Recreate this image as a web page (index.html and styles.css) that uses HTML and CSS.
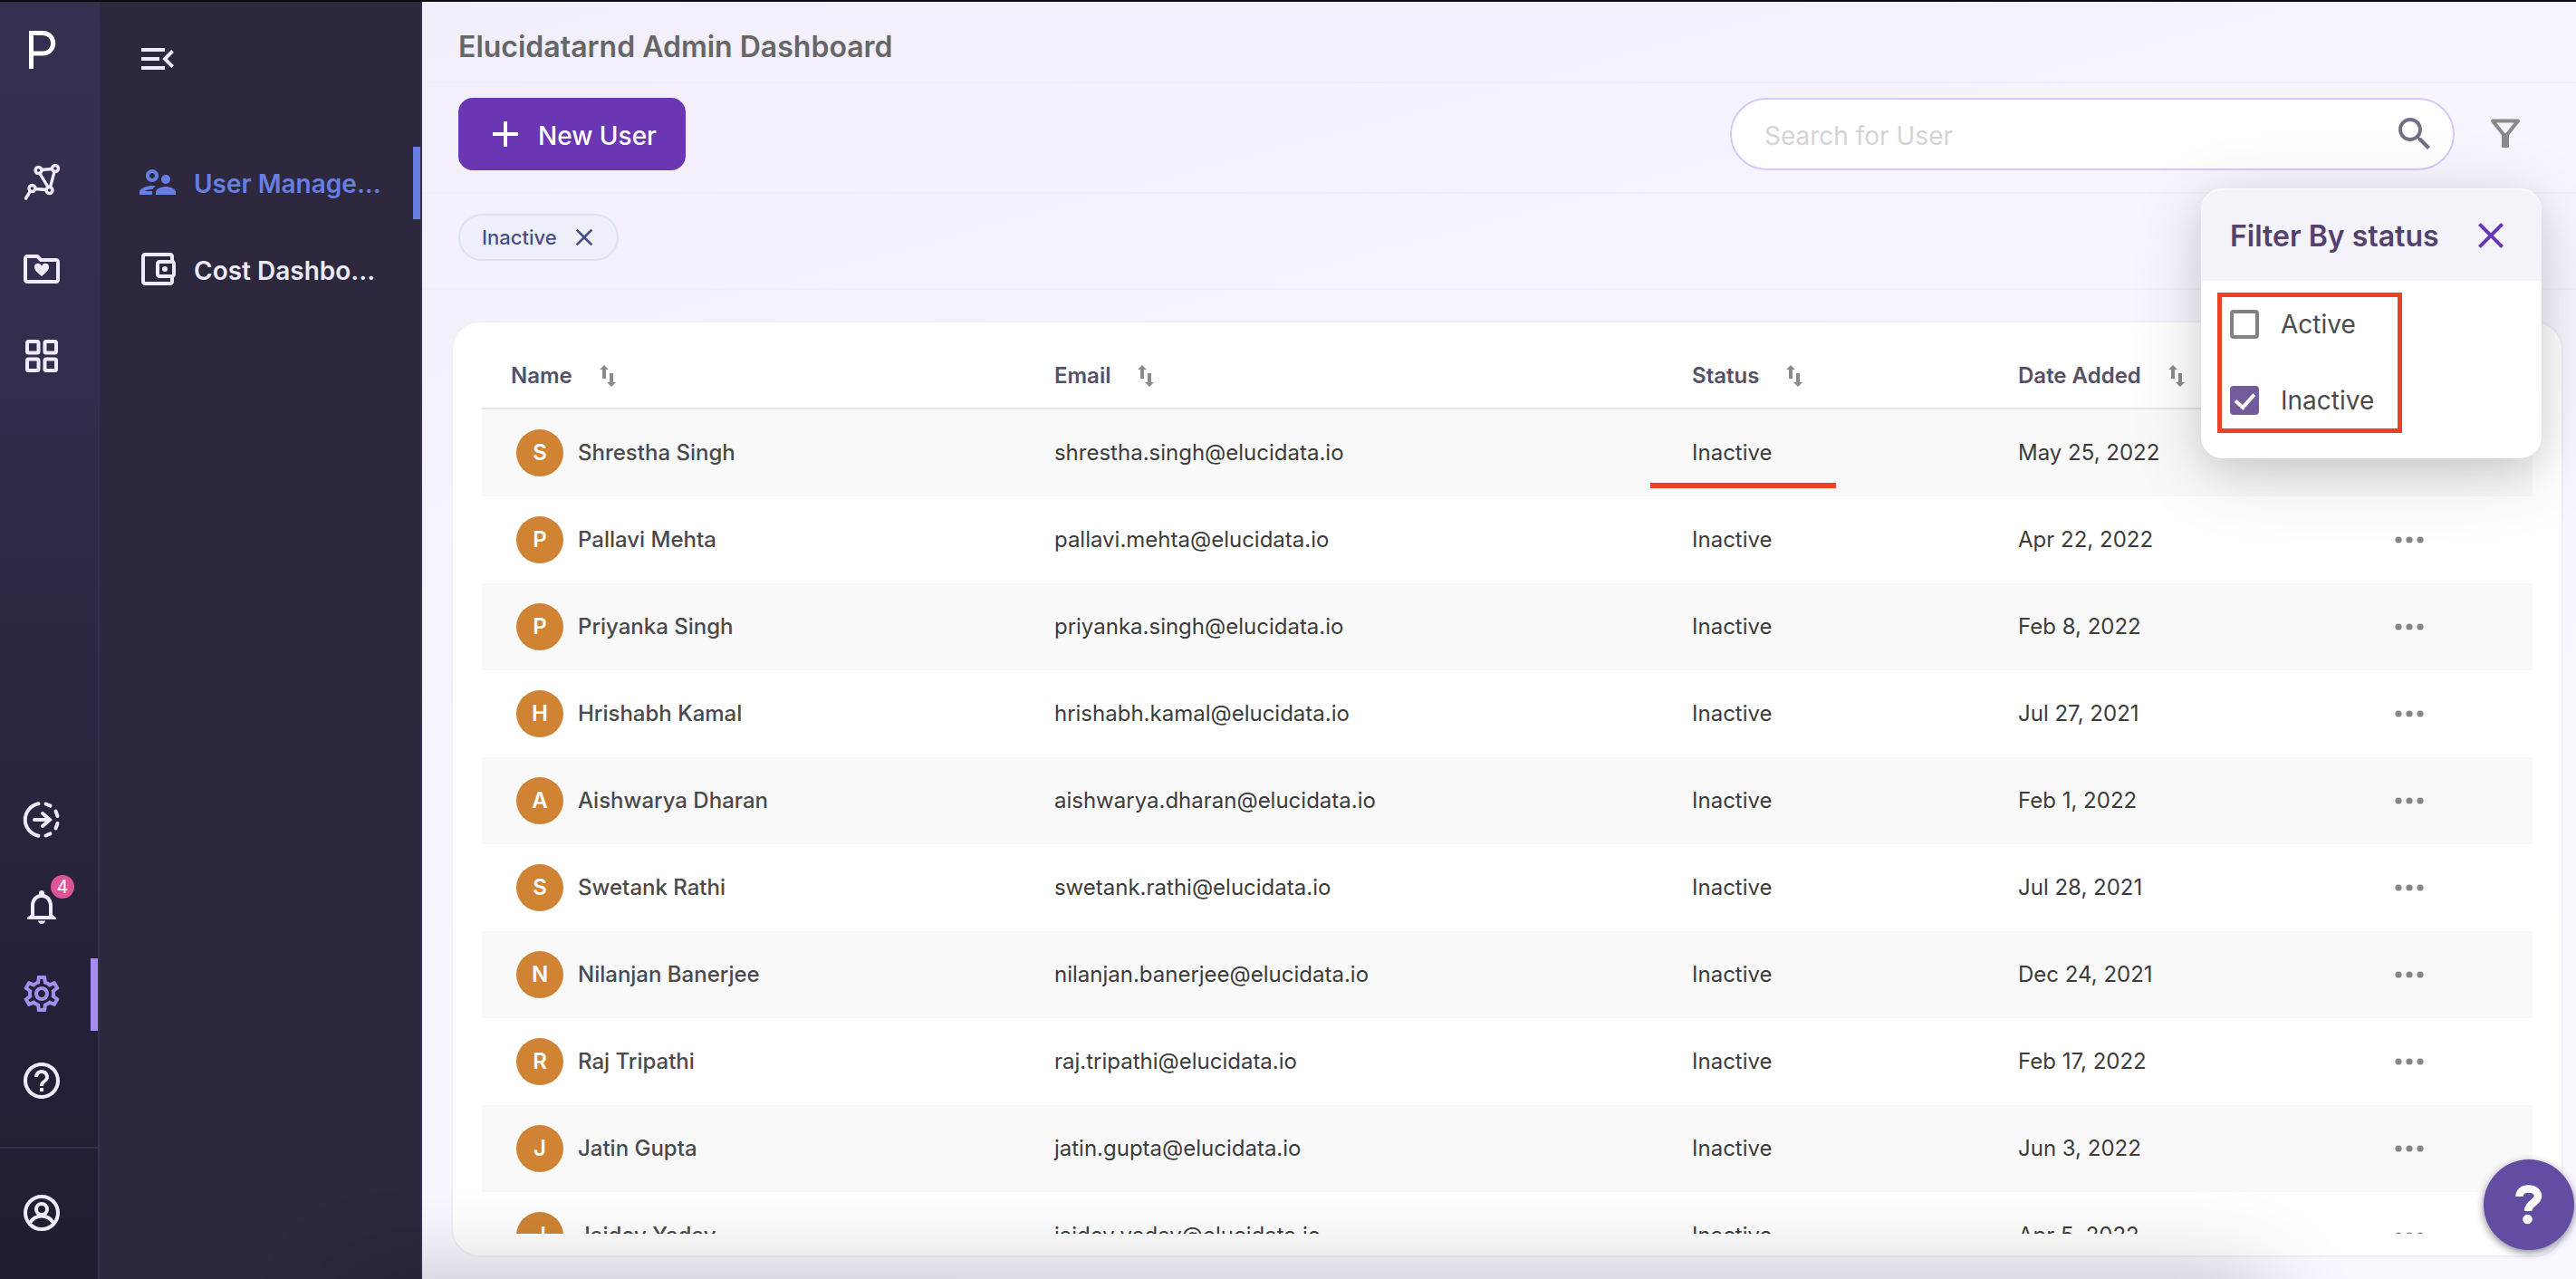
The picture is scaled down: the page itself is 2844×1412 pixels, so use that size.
FILE: index.html
```html
<!DOCTYPE html>
<html lang="en">
<head>
<meta charset="utf-8">
<title>Elucidatarnd Admin Dashboard</title>
<link rel="stylesheet" href="styles.css">
</head>
<body>
<svg class="sprite" aria-hidden="true">
  <symbol id="sort" viewBox="0 0 18 24"><path d="M5 0 10 5H7V15H3V5H0ZM13 24 8 19H11V9H15V19H18Z"/></symbol>
  <symbol id="dots" viewBox="0 0 48 48"><circle cx="12" cy="24" r="3.6"/><circle cx="24" cy="24" r="3.6"/><circle cx="36" cy="24" r="3.6"/></symbol>
  <symbol id="close" viewBox="0 0 24 24"><path d="M19 6.41 17.59 5 12 10.59 6.41 5 5 6.41 10.59 12 5 17.59 6.41 19 12 13.41 17.59 19 19 17.59 13.41 12z"/></symbol>
</svg>
<div class="app">
  <nav class="rail" aria-label="Main">
    <a class="logo" href="#" aria-label="Home"><svg viewBox="0 0 30 42"><path d="M2.500 42V2.500H15.500A11.250 11.250 0 0 1 15.500 25H2.500" fill="none" stroke="currentColor" stroke-width="5"/></svg></a>
    <a class="rail-link" href="#" aria-label="Graph"><svg class="icon" viewBox="0 0 48 48"><g fill="none" stroke="currentColor" stroke-width="3.400" stroke-linecap="round"><circle cx="20.500" cy="11" r="3.500"/><circle cx="39" cy="9" r="3.500"/><circle cx="32.500" cy="33" r="3.500"/><circle cx="13.500" cy="31" r="3.500"/><path d="M24 10.500 35.500 9.500M22 14.500 31 29.500M38 12.500 33.500 29.500M17 31.500 29 32.500M11.500 34 6.500 42"/></g></svg></a>
    <a class="rail-link" href="#" aria-label="Saved folders"><svg class="icon" viewBox="0 0 24 24"><path d="M20 6h-8l-2-2H4c-1.100 0-2 .9-2 2v12c0 1.100.9 2 2 2h16c1.100 0 2-.9 2-2V8c0-1.100-.9-2-2-2zm0 12H4V6h5.170l2 2H20zM12 16C9.600 14 8 12.600 8 11a2.050 2.050 0 0 1 4-.7 2.050 2.050 0 0 1 4 .7c0 1.600-1.600 3-4 5z"/></svg></a>
    <a class="rail-link" href="#" aria-label="Apps"><svg class="icon" viewBox="0 0 48 48"><g fill="none" stroke="currentColor" stroke-width="4"><rect x="8" y="8" width="12.500" height="12.500" rx="1.500"/><rect x="27.500" y="8" width="12.500" height="12.500" rx="1.500"/><rect x="8" y="27.500" width="12.500" height="12.500" rx="1.500"/><rect x="27.500" y="27.500" width="12.500" height="12.500" rx="1.500"/></g></svg></a>
    <a class="rail-link rail-lower" href="#" aria-label="Activity"><svg class="icon" viewBox="0 0 48 48"><g fill="none" stroke="currentColor" stroke-width="4" stroke-linecap="round"><path d="M20.500 6.300A18 18 0 0 0 20.500 41.700"/><path d="M28.500 6.500 33.500 8.700M39.500 14.500 41.500 20M41.500 28 39.500 33.500M33.500 39.300 28.500 41.500"/><path d="M16 24H32M25 17 33 24 25 31"/></g></svg></a>
    <a class="rail-link" href="#" aria-label="Notifications"><svg class="icon" viewBox="0 0 24 24"><path d="M12 21.500a2 2 0 0 0 2-1.700h-4a2 2 0 0 0 2 1.700zM18 16.500v-5c0-3.070-1.640-5.640-4.500-6.320V4.500a1.500 1.500 0 0 0-3 0v.68C7.630 5.860 6 8.420 6 11.500v5l-2 1.500v1h16v-1l-2-1.500zM16 17H8v-5.500C8 9.020 9.510 7 12 7s4 2.020 4 4.500V17z"/></svg><span class="badge">4</span></a>
    <a class="rail-link is-active" href="#" aria-label="Settings"><svg class="icon" viewBox="0 0 24 24"><path d="M19.430 12.980c.04-.32.07-.64.07-.98 0-.34-.03-.66-.07-.98l2.110-1.650c.19-.15.24-.42.12-.64l-2-3.460c-.09-.16-.26-.25-.44-.25-.06 0-.12.01-.17.030l-2.490 1c-.52-.4-1.080-.73-1.690-.98l-.38-2.650C14.460 2.180 14.250 2 14 2h-4c-.25 0-.46.18-.49.42l-.38 2.650c-.61.25-1.170.59-1.690.98l-2.490-1c-.06-.02-.12-.03-.18-.03-.17 0-.34.09-.43.25l-2 3.460c-.13.22-.07.49.12.64l2.110 1.650c-.04.32-.07.65-.07.98 0 .33.03.66.07.98l-2.110 1.650c-.19.15-.24.42-.12.64l2 3.460c.09.16.26.25.44.25.06 0 .12-.01.17-.03l2.490-1c.52.4 1.080.73 1.690.98l.38 2.650c.03.24.24.42.49.42h4c.25 0 .46-.18.49-.42l.38-2.650c.61-.25 1.170-.59 1.690-.98l2.490 1c.06.02.12.03.18.03.17 0 .34-.09.43-.25l2-3.460c.12-.22.07-.49-.12-.64l-2.110-1.650zm-1.980-1.710c.04.31.05.52.05.73 0 .21-.02.43-.05.73l-.14 1.130.89.7 1.080.84-.7 1.210-1.270-.51-1.040-.42-.9.68c-.43.32-.84.56-1.250.73l-1.060.43-.16 1.130-.2 1.350h-1.400l-.19-1.350-.16-1.130-1.060-.43c-.43-.18-.83-.41-1.230-.71l-.91-.7-1.060.43-1.270.51-.7-1.210 1.080-.84.89-.7-.14-1.130c-.03-.31-.05-.54-.05-.74s.02-.43.05-.73l.14-1.130-.89-.7-1.080-.84.7-1.210 1.270.51 1.040.42.9-.68c.43-.32.84-.56 1.250-.73l1.060-.43.16-1.130.2-1.350h1.390l.19 1.350.16 1.130 1.060.43c.43.18.83.41 1.230.71l.91.7 1.060-.43 1.270-.51.7 1.210-1.070.85-.89.7.14 1.130zM12 8c-2.210 0-4 1.790-4 4s1.790 4 4 4 4-1.790 4-4-1.790-4-4-4zm0 6c-1.100 0-2-.9-2-2s.9-2 2-2 2 .9 2 2-.9 2-2 2z"/></svg></a>
    <a class="rail-link" href="#" aria-label="Help"><svg class="icon" viewBox="0 0 24 24"><path d="M11 18h2v-2h-2v2zm1-16C6.480 2 2 6.480 2 12s4.480 10 10 10 10-4.480 10-10S17.520 2 12 2zm0 18c-4.410 0-8-3.590-8-8s3.590-8 8-8 8 3.590 8 8-3.590 8-8 8zm0-14c-2.210 0-4 1.790-4 4h2c0-1.100.9-2 2-2s2 .9 2 2c0 2-3 1.750-3 5h2c0-2.250 3-2.500 3-5 0-2.210-1.790-4-4-4z"/></svg></a>
    <div class="rail-foot"><a class="rail-link" href="#" aria-label="Account"><svg class="icon" viewBox="0 0 24 24"><g fill="none" stroke="currentColor" stroke-width="2"><circle cx="12" cy="12" r="9"/><circle cx="12" cy="10" r="3"/><path d="M5.500 17.500a7.500 7.500 0 0 1 13 0"/></g></svg></a></div>
  </nav>
  <aside class="side">
    <button class="collapse" type="button" aria-label="Collapse menu"><svg class="icon" viewBox="0 0 24 24"><path d="M3 18h13v-2H3v2zM3 6v2h13V6H3zm0 7h10v-2H3v2zm18 2.590L17.420 12 21 8.410 19.590 7l-5 5 5 5L21 15.590z"/></svg></button>
    <a class="side-link is-active" href="#"><svg class="icon" viewBox="0 0 24 24"><path d="M9 12c1.930 0 3.500-1.570 3.500-3.500S10.930 5 9 5 5.500 6.570 5.500 8.500 7.070 12 9 12zm0-5c.83 0 1.500.67 1.500 1.500S9.830 10 9 10s-1.500-.67-1.500-1.500S8.170 7 9 7zm.05 10H4.770c.99-.5 2.700-1 4.230-1 .11 0 .23.01.34.02.34-.73.93-1.330 1.640-1.810-.73-.13-1.420-.21-1.980-.21-2.340 0-7 1.170-7 3.500V19h7v-1.500c0-.17.02-.34.05-.5zm7.450-2.500c-1.840 0-5.500 1.010-5.500 3V19h11v-1.500c0-1.990-3.660-3-5.500-3zm1.210-1.820c.76-.43 1.290-1.240 1.290-2.180C19 9.120 17.880 8 16.500 8S14 9.120 14 10.500c0 .94.53 1.750 1.290 2.180.36.2.77.32 1.210.32s.85-.12 1.210-.32z"/></svg><span>User Manage...</span></a>
    <a class="side-link" href="#"><svg class="icon" viewBox="0 0 24 24"><path d="M21 7.280V5c0-1.100-.9-2-2-2H5c-1.110 0-2 .9-2 2v14c0 1.100.89 2 2 2h14c1.100 0 2-.9 2-2v-2.280c.59-.35 1-.98 1-1.720V9c0-.74-.41-1.370-1-1.720zM20 9v6h-7V9h7zM5 19V5h14v2h-6c-1.100 0-2 .9-2 2v6c0 1.100.9 2 2 2h6v2H5z"/><circle cx="16" cy="12" r="1.500"/></svg><span>Cost Dashbo...</span></a>
  </aside>
  <main class="main">
    <h1 class="title">Elucidatarnd Admin Dashboard</h1>
    <div class="toolbar">
      <button class="new-user" type="button"><svg class="icon" viewBox="0 0 24 24"><path d="M19 13h-6v6h-2v-6H5v-2h6V5h2v6h6v2z"/></svg><span>New User</span></button>
      <div class="tools">
        <label class="search"><input type="search" placeholder="Search for User" aria-label="Search for User"><svg class="icon" viewBox="0 0 24 24"><path d="M15.500 14h-.79l-.28-.27C15.410 12.590 16 11.110 16 9.500 16 5.910 13.090 3 9.500 3S3 5.910 3 9.500 5.910 16 9.500 16c1.610 0 3.090-.59 4.230-1.570l.27.28v.79l5 4.990L20.490 19l-4.990-5zm-6 0C7.010 14 5 11.990 5 9.500S7.010 5 9.500 5 14 7.010 14 9.500 11.990 14 9.500 14z"/></svg></label>
        <div class="filter">
          <button class="filter-button" type="button" aria-label="Filter"><svg class="icon" viewBox="0 0 48 48"><path d="M10 9.500H38L24 27Z" fill="none" stroke="currentColor" stroke-width="4" stroke-linejoin="round"/><rect x="20" y="23" width="8" height="16" rx="1.500"/></svg></button>
          <section class="popover" aria-label="Filter By status">
            <header class="popover-head"><h2>Filter By status</h2><button type="button" aria-label="Close filter"><svg class="icon"><use href="#close"/></svg></button></header>
            <div class="options">
              <label class="option"><input type="checkbox">Active</label>
              <label class="option"><input type="checkbox" checked>Inactive</label>
            </div>
          </section>
        </div>
      </div>
    </div>
    <div class="chips"><span class="chip">Inactive<button type="button" aria-label="Remove Inactive"><svg><use href="#close"/></svg></button></span></div>
    <section class="card">
      <div class="scroll">
      <table>
        <colgroup><col class="c-name"><col class="c-email"><col class="c-status"><col class="c-date"><col></colgroup>
        <thead><tr><th><button type="button">Name<svg><use href="#sort"/></svg></button></th><th><button type="button">Email<svg><use href="#sort"/></svg></button></th><th><button type="button">Status<svg><use href="#sort"/></svg></button></th><th><button type="button">Date Added<svg><use href="#sort"/></svg></button></th><th></th></tr></thead>
        <tbody id="rows"></tbody>
      </table>
      </div>
    </section>
  </main>
</div>
<button class="fab" type="button" aria-label="Help"><svg viewBox="0 0 30 44"><path d="M4.500 13C4.500 7.500 8.500 4.500 14.500 4.500S25 7.500 25 12.500C25 19.500 14 20 14 29" fill="none" stroke="currentColor" stroke-width="8.500"/><circle cx="13.500" cy="38" r="5.300"/></svg></button>
<script src="app.js"></script>
</body>
</html>
```
FILE: styles.css
```css
* { box-sizing: border-box; }
body { margin: 0; font-family: Inter, "Liberation Sans", sans-serif; font-size: 24px; line-height: 32px; color: #3c3c3c; overflow: hidden; }
button { border: 0; padding: 0; margin: 0; background: none; font: inherit; color: inherit; display: flex; align-items: center; cursor: pointer; }
a { color: inherit; text-decoration: none; }
h1, h2 { margin: 0; font-weight: 600; }
svg { display: block; fill: currentColor; flex: none; }
.sprite { position: absolute; width: 0; height: 0; }
.icon { width: 48px; height: 48px; }

.app { display: flex; height: 100vh; border-top: 2px solid #0c0a10; }

.rail { width: 110px; flex: none; display: flex; flex-direction: column; color: #f0ebfc; background: linear-gradient(#372f50, #332c4c 30%, #26213a 75%, #211d30); border-right: 2px solid #353050; }
.logo { height: 151px; padding: 32px 0 0 32px; color: #fff; }
.logo svg { width: 30px; height: 42px; }
.rail-link { position: relative; height: 96px; flex: none; display: flex; align-items: center; padding-left: 22px; }
.rail-lower { margin-top: auto; }
.rail-link.is-active { color: #a48eee; }
.rail-link.is-active::after { content: ""; position: absolute; right: 0; top: 9px; width: 8px; height: 80px; background: currentColor; }
.badge { position: absolute; left: 56px; top: 13px; width: 26px; height: 26px; border-radius: 50%; background: #dd5596; color: #fff; font-size: 20px; line-height: 26px; text-align: center; }
.rail-foot { height: 146px; flex: none; margin-top: 25px; padding-top: 23px; border-top: 2px solid #353050; }

.side { width: 356px; flex: none; padding-top: 39px; color: #ebebfb; background: #2d283e; border-right: 2px solid #353050; }
.collapse { margin: 0 0 64px 40px; }
.side-link { position: relative; height: 96px; display: flex; align-items: center; gap: 16px; padding-left: 40px; font-size: 28px; font-weight: 600; }
.side-link span, .new-user span { padding-top: 3px; }
.side-link.is-active { color: #677ee3; }
.side-link.is-active::after { content: ""; position: absolute; right: 0; top: 9px; width: 8px; height: 80px; background: currentColor; }

.main { position: relative; flex: 1; min-width: 0; display: flex; flex-direction: column; background: linear-gradient(165deg, #f2effc, #f4f1fc 20%, #f7f6ff 40%, #faf8ff); }
.title { height: 90px; padding: 30px 0 0 40px; font-size: 32px; line-height: 40px; color: #666; border-bottom: 2px solid #f1edf9; }
.toolbar { height: 122px; padding: 16px 54px 0 40px; display: flex; justify-content: space-between; border-bottom: 2px solid #f1edf9; }
.new-user { height: 80px; padding: 0 32px 0 28px; gap: 12px; border-radius: 16px; background: #6a36b4; color: #fff; font-size: 28px; font-weight: 500; }
.tools { display: flex; gap: 32px; }
.search { width: 800px; height: 80px; display: flex; align-items: center; padding: 0 18px 0 36px; background: #fff; border: 2px solid #dac6f6; border-radius: 40px; color: #756f85; }
.search input { flex: 1; min-width: 0; border: 0; outline: 0; padding: 3px 0 0; background: none; font: inherit; font-size: 28px; color: #444; }
.search input::placeholder { color: #d4d4d4; }
.filter { position: relative; width: 48px; }
.filter-button { height: 80px; color: #8a8a8a; }

.popover { position: absolute; z-index: 2; top: 100px; right: -16px; width: 376px; height: 298px; background: #fff; border-radius: 24px; box-shadow: 0 16px 80px rgba(0, 0, 0, .16), 0 12px 32px rgba(0, 0, 0, .07); }
.popover-head { height: 102px; padding: 0 32px; display: flex; align-items: center; justify-content: space-between; background: #f5f3fa; border-top: 2px solid #fbfafd; border-radius: 24px 24px 0 0; color: #6a36b4; }
.popover-head h2 { padding-top: 2px; font-size: 32px; line-height: 40px; color: #53416f; }
.options { width: 204px; margin: 13px 0 0 18px; padding: 9px 9px 10px; display: grid; gap: 42px; border: 5px solid #ec4125; }
.option { display: flex; align-items: center; gap: 24px; font-size: 28px; line-height: 42px; height: 42px; color: #4b4b4b; }
.option input { appearance: none; flex: none; width: 32px; height: 32px; margin: 0; border: 4px solid #828282; border-radius: 4px; }
.option input:checked { border-color: #735a9a; background: #735a9a; display: grid; place-items: center; }
.option input:checked::after { content: ""; width: 9px; height: 17px; margin-bottom: 6px; border: solid #fff; border-width: 0 4px 4px 0; rotate: 42deg; }

.chips { height: 106px; padding: 22px 40px; border-bottom: 2px solid #f1edf9; }
.chip { width: fit-content; height: 52px; padding: 0 26px 0 24px; display: flex; align-items: center; gap: 20px; border: 2px solid #dfe1f1; border-radius: 26px; background: #efeff9; color: #465087; font-size: 22px; font-weight: 500; }
.chip svg { width: 32px; height: 32px; margin: -6px; }

.card { flex: 1; min-height: 0; margin: 34px 14px 24px 32px; padding: 24px 32px; background: #fff; border: 2px solid #f0eef8; border-radius: 32px; }
.scroll { height: 100%; overflow: hidden; }
table { width: 100%; table-layout: fixed; border-collapse: separate; border-spacing: 0; }
.c-name { width: 26.500%; }
.c-email { width: 31.100%; }
.c-status { width: 15.900%; }
.c-date { width: 18%; }
th { height: 72px; padding: 0 32px; text-align: left; font-weight: 600; color: #565066; border-bottom: 2px solid #e5e5e5; }
th svg { width: 18px; height: 24px; margin-left: 30px; color: #8a8a8a; }
td { height: 96px; padding: 0 32px; }
tbody tr:nth-child(odd) { background: #f9f9f9; }
.person { display: flex; align-items: center; gap: 16px; padding-left: 6px; font-weight: 500; color: #4a4a4a; }
.avatar { width: 52px; height: 52px; border-radius: 50%; background: #d08433; color: #fff; font-weight: 600; line-height: 52px; text-align: center; }
td button { color: #858585; }
.marked { position: relative; }
.marked::after { content: ""; position: absolute; left: -14px; bottom: 9px; width: 205px; height: 6px; background: #ec4125; }

.fab { position: fixed; z-index: 3; right: 2px; bottom: 32px; width: 100px; height: 100px; justify-content: center; border-radius: 50%; background: #624da3; color: #fff; box-shadow: 0 3px 8px rgba(20, 20, 50, .5); }
.fab svg { width: 30px; height: 44px; }
.app::after { content: ""; position: fixed; z-index: 2; left: 380px; right: 340px; top: 100%; height: 200px; border-radius: 24px; box-shadow: 0 0 100px rgba(0, 0, 0, .24); pointer-events: none; }
```
FILE: app.js
```js
const users = [
  ["Shrestha Singh", "shrestha.singh", "May 25, 2022"],
  ["Pallavi Mehta", "pallavi.mehta", "Apr 22, 2022"],
  ["Priyanka Singh", "priyanka.singh", "Feb 8, 2022"],
  ["Hrishabh Kamal", "hrishabh.kamal", "Jul 27, 2021"],
  ["Aishwarya Dharan", "aishwarya.dharan", "Feb 1, 2022"],
  ["Swetank Rathi", "swetank.rathi", "Jul 28, 2021"],
  ["Nilanjan Banerjee", "nilanjan.banerjee", "Dec 24, 2021"],
  ["Raj Tripathi", "raj.tripathi", "Feb 17, 2022"],
  ["Jatin Gupta", "jatin.gupta", "Jun 3, 2022"],
  ["Jaidev Yadav", "jaidev.yadav", "Apr 5, 2022"]
];
document.getElementById("rows").innerHTML = users.map(([name, mail, date], i) => `
  <tr>
    <td><div class="person"><span class="avatar">${name[0]}</span>${name}</div></td>
    <td>${mail}@elucidata.io</td>
    <td${i === 0 ? ' class="marked"' : ""}>Inactive</td>
    <td>${date}</td>
    <td><button type="button" aria-label="Actions for ${name}"><svg class="icon"><use href="#dots"/></svg></button></td>
  </tr>`).join("");
```
